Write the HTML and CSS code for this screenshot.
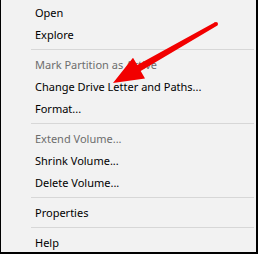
FILE: index.html
```html
<!DOCTYPE html>
<html lang="en">
<head>
<meta charset="UTF-8">
<title>Disk Management context menu</title>
<link rel="stylesheet" href="styles.css">
</head>
<body>
<div class="menu">
  <ul class="menu-list">
    <li class="item">Open</li>
    <li class="item">Explore</li>
    <li class="sep"></li>
    <li class="item disabled">Mark Partition as Active</li>
    <li class="item">Change Drive Letter and Paths...</li>
    <li class="item">Format...</li>
    <li class="sep"></li>
    <li class="item disabled">Extend Volume...</li>
    <li class="item">Shrink Volume...</li>
    <li class="item">Delete Volume...</li>
    <li class="sep"></li>
    <li class="item">Properties</li>
    <li class="sep"></li>
    <li class="item">Help</li>
  </ul>
  <!-- callout arrow drawn over the menu -->
  <svg class="arrow" width="258" height="254" viewBox="0 0 258 254">
    <polygon fill="#f20000" points="215,22.3 137.3,65.1 133,57.7 113,83 145,78.5 140.7,71.1 217,25.7"/>
    <circle cx="216" cy="24" r="2" fill="#f20000"/>
  </svg>
</div>
</body>
</html>
```

FILE: styles.css
```css
body {
  margin: 0;
  font-family: "Noto Sans", "Liberation Sans", sans-serif;
}

.menu {
  position: relative;
  width: 255px;
  height: 252px;
  background: #f2f2f2;
  border-left: 1px solid #000;
  border-right: 2px solid #000;
  border-bottom: 2px solid #000;
  overflow: hidden;
}

.menu-list {
  list-style: none;
  margin: 0;
  padding: 2px 0 0 0;
}

.item {
  height: 22px;
  line-height: 22px;
  padding-left: 34px;
  font-size: 11px;
  color: #000;
  white-space: nowrap;
}

.item.disabled {
  color: #6d6d6d;
}

.sep {
  height: 1px;
  margin: 3px 2px 4px 30px;
  background: #d7d7d7;
}

.arrow {
  position: absolute;
  left: -1px;
  top: 0;
}
```
